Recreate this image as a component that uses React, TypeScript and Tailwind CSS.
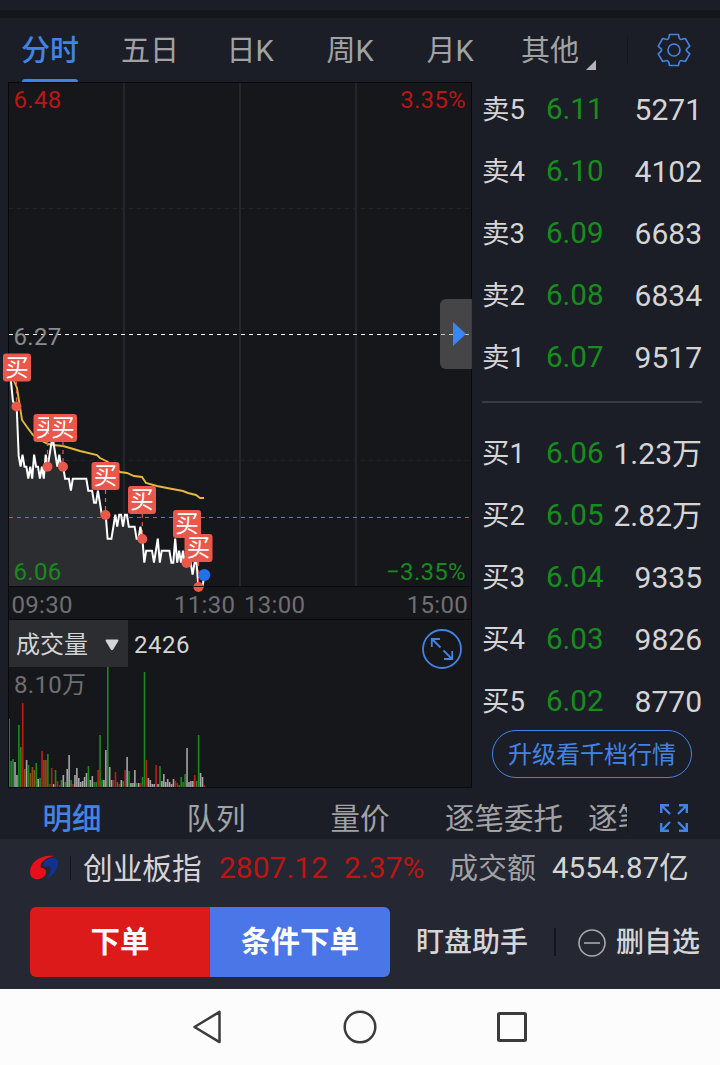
import clsx from "clsx";

interface Quote {
  label: string;
  price: string;
  volume: string;
}

const periods = ["分时", "五日", "日K", "周K", "月K", "其他"];
const detailTabs = ["明细", "队列", "量价", "逐笔委托"];

const asks: Quote[] = [
  { label: "卖5", price: "6.11", volume: "5271" },
  { label: "卖4", price: "6.10", volume: "4102" },
  { label: "卖3", price: "6.09", volume: "6683" },
  { label: "卖2", price: "6.08", volume: "6834" },
  { label: "卖1", price: "6.07", volume: "9517" },
];

const bids: Quote[] = [
  { label: "买1", price: "6.06", volume: "1.23万" },
  { label: "买2", price: "6.05", volume: "2.82万" },
  { label: "买3", price: "6.04", volume: "9335" },
  { label: "买4", price: "6.03", volume: "9826" },
  { label: "买5", price: "6.02", volume: "8770" },
];

// One value per minute, in ticks below the first support level
const ticks = [
  -7.5, -6.2, -4.5, -4.1, -4, 0.1, 1, 0, 1, 1, 2, 1, 2, 0, 1, 1, 2, 1, 2, 0, 1, 0, -1, -1, 0, 1, 0, 1, 1, 2, 2, 2, 3,
  2, 2, 2, 2, 2, 2, 2, 2, 3, 3, 3, 4, 4, 3, 4, 5, 5, 5, 7, 7, 7, 6, 5, 6, 5, 5, 6, 5, 5, 6, 6, 6, 6, 7, 7, 6, 7, 9, 8,
  8, 8, 8, 9, 8, 7, 9, 8, 8, 8, 8, 8, 9, 9, 7, 9, 8, 9, 8, 9, 9, 9, 9, 10, 9, 9, 11, 11, 11, 10.2,
];

const STEP = 1.933;
const minuteX = (i: number) => 9 + i * STEP;
const tickY = (n: number) => 372.7 + n * 12;
const pricePoints = ticks.map((n, i) => `${minuteX(i).toFixed(1)},${tickY(n).toFixed(1)}`).join(" ");

const averagePoints =
  "14,299 17,306 22,338 27,345 33,353 42,359 48,362 53,363 63,364 70,366 80,369 97,373 100,376 108,380 120,390 127,391 134,394 142,395 146,401 157,404 167,406 183,409 188,411 196,413 200,416 204,416";

// Colour letter and height of each volume bar
const volumes =
  "g68 g26 g28 w25 w12 g62 g40 r84 o18 w27 g22 o14 o20 o17 g24 w8 g9 r36 o27 o27 g33 r3 r19 w3 g17 r6 r2 g7 w12 g5 w18 w32 g7 r3 w12 w19 w9 w5 w6 w10 w14 g21 w7 w11 g5 g5 r17 g52 g7 w7 w37 g120 w20 w7 r7 r15 g5 r3 w7 g6 r17 w30 g16 w4 w4 w17 g4 w4 r4 g10 g115 r27 w9 w7 w3 w3 r22 w3 g21 w6 w13 w5 w8 w5 w3 w8 r6 r4 g2 g10 g5 g13 w39 w5 w6 w6 r12 g6 g52 w14 w10 r2".split(
    " "
  );

const barColors: Record<string, string> = {
  g: "#1d8a1f",
  r: "#be1b1b",
  o: "#8a521a",
  w: "#a6a6a8",
};

// Buy marks: badge corner, then the dot it points at
const marks = [
  { x: 3, y: 271.5, dotX: 16.5, dotY: 324.5 },
  { x: 33.5, y: 332, dotX: 47.5, dotY: 384.7 },
  { x: 49, y: 332, dotX: 63, dotY: 384.7 },
  { x: 91.5, y: 380, dotX: 105.5, dotY: 433 },
  { x: 128, y: 404, dotX: 142.3, dotY: 457 },
  { x: 173, y: 428, dotX: 186.5, dotY: 481 },
  { x: 184.5, y: 452, dotX: 198.5, dotY: 505 },
];

function PeriodTabs() {
  return (
    <nav className="flex h-16 items-center">
      {periods.map((name, i) => (
        <div
          key={name}
          className={clsx(
            "relative flex h-16 w-[100px] items-center justify-center pt-0.5 text-[29px]",
            i === 0 ? "font-medium text-[#4284e4]" : "text-[#a2a2a5]"
          )}
        >
          {name}
          {i === 0 && <span className="absolute bottom-0 left-[22px] h-[3px] w-14 rounded-t-sm bg-[#4284e4]" />}
          {i === 5 && (
            <svg className="absolute right-1 bottom-3 size-[10px]" viewBox="0 0 10 10" fill="#b4b4b6">
              <path d="M10 0v10H0z" />
            </svg>
          )}
        </div>
      ))}
      <div className="ml-[27px] h-[30px] w-px bg-[#14161c]" />
      <svg
        className="ml-[29px] size-[34px]"
        viewBox="-17 -17 34 34"
        fill="none"
        stroke="#4284e4"
        strokeWidth="1.6"
        strokeLinejoin="round"
      >
        <path d="M-4.5-15.5h9l.6 3q.3 1.6 1.9 2l4.3-1 4.5 7.6-2.7 2.5q-1.4 1.4 0 2.8l2.7 2.5-4.5 7.6-4.3-1q-1.600.400-1.900 2l-.6 3h-9l-.6-3q-.3-1.600-1.900-2l-4.300 1-4.500-7.600 2.700-2.500q1.400-1.400 0-2.800l-2.700-2.500 4.500-7.600 4.300 1q1.600-.400 1.900-2z" />
        <circle r="6" />
      </svg>
    </nav>
  );
}

function PriceChart() {
  return (
    <div className="relative h-[538px] w-[472px]">
      <svg className="block" width="472" height="538" viewBox="0 0 472 538">
        <rect x="8.5" y=".5" width="463" height="537" fill="#16171b" stroke="#08090c" />
        <path d="M124 1v503M240 1v503M356 1v503" stroke="#2a2b30" strokeWidth="1.6" />
        <path d="M9 126.5h462M9 378.5h462" stroke="#222328" strokeDasharray="4 4" />
        <polygon points={`${pricePoints} 204,504 9,504`} fill="#2c2d31" />
        <path d="M9 252.5h462" stroke="#fff" strokeWidth="1.2" strokeDasharray="4 4" />
        <path d="M9 435.5h462" stroke="#c9574c" strokeWidth="1.2" strokeDasharray="4 4" />
        <polyline points={averagePoints} fill="none" stroke="#e6b840" strokeWidth="1.9" />
        <polyline points={pricePoints} fill="none" stroke="#fff" strokeWidth="2" />
        <g fontSize="24" letterSpacing=".3">
          <text x="13.5" y="25.5" fill="#bd1414">6.48</text>
          <text x="466" y="25.5" fill="#bd1414" textAnchor="end">3.35%</text>
          <text x="13.5" y="263" fill="#8b8b8d">6.27</text>
          <text x="13.5" y="498" fill="#188a1c">6.06</text>
          <text x="466" y="498" fill="#188a1c" textAnchor="end">−3.35%</text>
        </g>
        <path d="M9 504.5h463" stroke="#08090c" />
        <g fontSize="24" letterSpacing=".3" fill="#6f6f73">
          <text x="11.5" y="530.5">09:30</text>
          <text x="174" y="530.5">11:30</text>
          <text x="244" y="530.5">13:00</text>
          <text x="468" y="530.5" textAnchor="end">15:00</text>
        </g>
        {marks.map((m) => (
          <g key={m.x}>
            <path d={`M${m.dotX} ${m.y + 28}V${m.dotY}`} stroke="#e9584a" strokeWidth="1.2" strokeDasharray="4 4" />
            <circle cx={m.dotX} cy={m.dotY} r="5" fill="#e9584a" />
          </g>
        ))}
        {marks.map((m) => (
          <g key={m.x}>
            <rect x={m.x} y={m.y} width="28" height="28" rx="3" fill="#e9584a" />
            <text x={m.x + 14} y={m.y + 22.2} fontSize="23.5" fill="#fff" textAnchor="middle">买</text>
          </g>
        ))}
        <path d="M193.5 504.5h10" stroke="#16171b" />
        <circle cx="204.3" cy="493" r="6" fill="#2071ee" />
      </svg>
      <button className="absolute top-[217px] right-0 h-[70px] w-8 rounded-l-md bg-[#7f7f80]/45">
        <svg className="ml-[13px]" width="13" height="24" viewBox="0 0 13 24" fill="#3b86f7">
          <path d="M0 0l13 12L0 24z" />
        </svg>
      </button>
    </div>
  );
}

function VolumeChart() {
  return (
    <div className="relative ml-2 h-[168px] w-[464px] border border-t-0 border-[#08090c] bg-[#16171b]">
      <div className="flex h-[47px] items-center">
        <div className="flex h-full w-[119px] items-center bg-[#2c2d31] pt-0.5 pl-[7px] text-2xl text-[#d5d5d6]">
          成交量
          <svg className="ml-[17px]" width="14" height="12" viewBox="0 0 14 12" fill="#d5d5d6">
            <path d="M1.5.5h11q1.5 0 .8 1.5L8.2 10.5q-1.200 1.500-2.400 0L.7 2Q0 .5 1.5.5z" />
          </svg>
        </div>
        <span className="ml-[6px] pt-0.5 text-2xl tracking-[0.5px] text-[#d5d5d6]">2426</span>
      </div>
      <span className="ml-[5px] block pt-0.5 text-2xl tracking-[0.3px] text-[#6f6f73]">8.10万</span>
      <svg className="absolute bottom-0 left-0" width="200" height="120" viewBox="0.6 0 200 120">
        {volumes.map((v, i) => {
          const height = Number(v.slice(1));
          return <rect key={i} x={i * STEP} y={120 - height} width="1.6" height={height} fill={barColors[v[0]]} />;
        })}
      </svg>
      <button className="absolute top-[9px] right-[9px]">
        <svg width="40" height="40" viewBox="0 0 40 40" fill="none" stroke="#4284e4" strokeWidth="1.8">
          <circle cx="20" cy="20" r="19" />
          <path d="M9.8 18V10H18M10 10l8.5 8.5M30.2 22v8H22M30 30l-8.5-8.5" />
        </svg>
      </button>
    </div>
  );
}

function QuoteRow({ quote }: { quote: Quote }) {
  return (
    <div className="flex h-[62px] items-center pt-0.5 text-[#d5d5d6]">
      <span className="w-16 text-[27.5px]">{quote.label}</span>
      <span className="w-[60px] text-[29.5px] text-[#168e1c]">{quote.price}</span>
      <span className="flex-1 text-right text-[30px] whitespace-nowrap">{quote.volume}</span>
    </div>
  );
}

function OrderBook() {
  return (
    <aside className="-mt-1 w-[248px] pr-[18px] pl-[10px]">
      {asks.map((q) => (
        <QuoteRow key={q.label} quote={q} />
      ))}
      <div className="mt-[13px] mb-[19px] h-0.5 bg-[#383b46]" />
      {bids.map((q) => (
        <QuoteRow key={q.label} quote={q} />
      ))}
      <button className="-mt-0.5 ml-[10px] h-12 w-[200px] rounded-full border border-[#4284e4] pt-0.5 text-2xl text-[#4284e4]">
        升级看千档行情
      </button>
    </aside>
  );
}

function DetailTabs() {
  return (
    <div className="flex h-[51px] items-center pt-2 text-[29.5px] text-[#a2a2a5]">
      {detailTabs.map((name, i) => (
        <span key={name} className={clsx("w-36 pt-1 text-center", i === 0 && "font-medium text-[#4284e4]")}>
          {name}
        </span>
      ))}
      <span className="ml-3 w-[39px] overflow-hidden pt-1 whitespace-nowrap">逐笔成交</span>
      <span className="h-[30px] w-px bg-[#14161c]" />
      <svg className="ml-8" width="28" height="28" viewBox="0 0 28 28" fill="none" stroke="#4284e4" strokeWidth="2.4">
        <path d="M1.2 9V1.2H9M1 1l9 9M19 1.200h7.800V9M27 1l-9 9M1.200 19v7.800H9M1 27l9-9M19 26.800h7.800V19M27 27l-9-9" />
      </svg>
    </div>
  );
}

function IndexBar() {
  return (
    <div className="flex h-[57px] items-center pl-[30px] text-[29px] whitespace-nowrap">
      <svg width="28" height="28" viewBox="0 0 28 28">
        <path d="M24 2C10 0 0 9 0 18c0 10 14 9 16 1 .5-3-1.500-5-5-5C9 9 15 4 24 2z" fill="#e60f1c" />
        <path d="M13.500 10c1-6 14.500-9 14.500-2 0 9-6 15-13 17 5-4 8-10 4-13-2 1-5.500 1-5.500-2z" fill="#10338f" />
      </svg>
      <div className="ml-3 h-6 w-px bg-[#14161c]" />
      <span className="ml-3 w-[136px] pt-[3px] text-[29.7px] text-[#d5d5d6]">创业板指</span>
      <span className="w-[125px] pt-px text-[30px] text-[#bd1414]">2807.12</span>
      <span className="w-[105px] pt-px text-[30px] text-[#bd1414]">2.37%</span>
      <span className="w-[103px] pt-[3px] text-[#a2a2a5]">成交额</span>
      <span className="pt-0.5 text-[29.5px] text-[#d5d5d6]">4554.87亿</span>
    </div>
  );
}

function ActionBar() {
  return (
    <div className="flex h-[93px] items-center pb-0.5 pl-[30px] font-medium text-[#d5d5d6]">
      <button className="h-[70px] w-[180px] rounded-l-md bg-[#dc1a1a] pt-[3px] text-[29.5px] font-bold text-white">
        下单
      </button>
      <button className="h-[70px] w-[180px] rounded-r-md bg-[#4a76e8] pt-[3px] text-[29.5px] font-bold text-white">
        条件下单
      </button>
      <span className="ml-[26px] w-[138px] pt-[3px] text-[28px] whitespace-nowrap">盯盘助手</span>
      <span className="h-7 w-0.5 bg-[#15161d]" />
      <svg className="mt-0.5 ml-[22px]" width="28" height="28" viewBox="0 0 28 28" fill="none" stroke="#a8a8ab" strokeWidth="1.6">
        <circle cx="14" cy="14" r="13" />
        <path d="M6 14h16" />
      </svg>
      <span className="ml-[10px] pt-[3px] text-[28px] whitespace-nowrap">删自选</span>
    </div>
  );
}

function SystemNav() {
  return (
    <div className="flex h-[76px] items-center justify-center gap-[118px] bg-[#fcfcfc]">
      <svg width="34" height="34" viewBox="0 0 34 34" fill="none" stroke="#3b3b3b" strokeWidth="2.5" strokeLinejoin="round">
        <path d="M3.500 17L28.500 1.900v30.200z" />
      </svg>
      <svg width="34" height="34" viewBox="0 0 34 34" fill="none" stroke="#3b3b3b" strokeWidth="2.5">
        <circle cx="17" cy="17" r="15.3" />
      </svg>
      <svg width="34" height="34" viewBox="0 0 34 34" fill="none" stroke="#3b3b3b" strokeWidth="3">
        <rect x="3.5" y="3.5" width="27" height="27" rx="1" />
      </svg>
    </div>
  );
}

export default function App() {
  return (
    <div className="h-[1065px] w-[720px] overflow-hidden bg-[#1b1e27] font-[Roboto,'Noto_Sans_CJK_SC',sans-serif] leading-none">
      <div className="h-[10px]" />
      <div className="h-2 bg-[#15161b]" />
      <PeriodTabs />
      <main className="flex h-[706px]">
        <div>
          <PriceChart />
          <VolumeChart />
        </div>
        <OrderBook />
      </main>
      <DetailTabs />
      <footer className="bg-[#252733]">
        <IndexBar />
        <ActionBar />
      </footer>
      <SystemNav />
    </div>
  );
}
